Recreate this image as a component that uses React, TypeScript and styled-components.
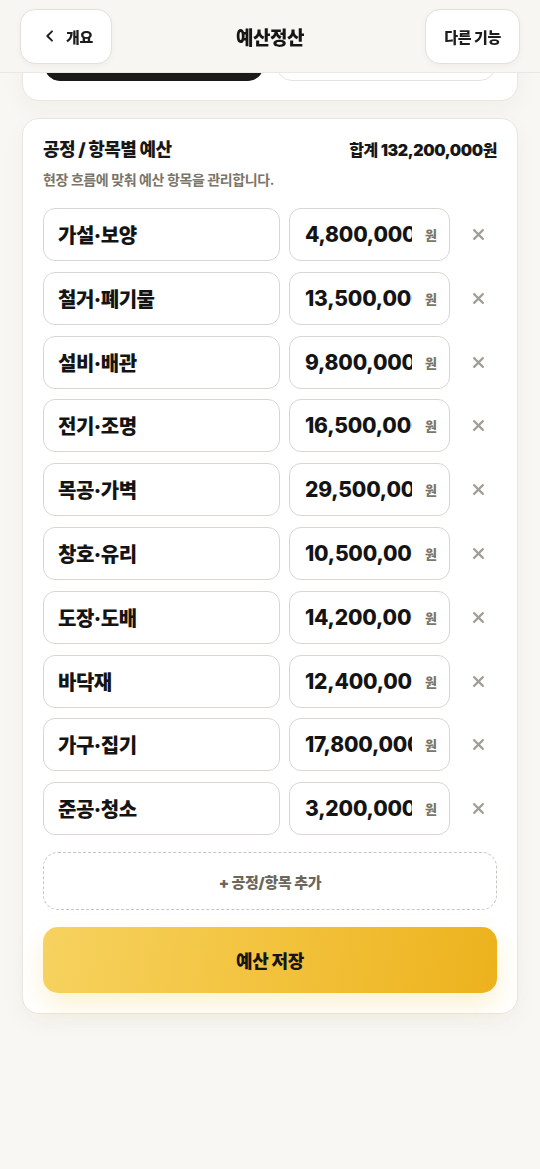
import React from "react";
import styled, { createGlobalStyle } from "styled-components";

const Global = createGlobalStyle`
  * { box-sizing: border-box; }
  html, body { margin: 0; padding: 0; background: #f8f7f3; }
  body {
    font-family: Inter, "Noto Sans CJK KR", "Noto Sans", sans-serif;
    color: #171717;
    -webkit-font-smoothing: antialiased;
  }
`;

const Header = styled.header`
  position: fixed;
  top: 0;
  left: 0;
  right: 0;
  height: 73px;
  z-index: 10;
  background: #f7f6f2;
  border-bottom: 1px solid #ebe8e2;
  display: grid;
  grid-template-columns: 1fr auto 1fr;
  align-items: center;
  padding: 0 20px;
`;

const HeadButton = styled.button<{ $align: "start" | "end" }>`
  justify-self: ${(p) => p.$align};
  height: 55px;
  padding-left: ${(p) => (p.$align === "start" ? "21px" : "18px")};
  padding-right: 18px;
  background: #fff;
  border: 1px solid #e3e0d9;
  border-radius: 15px;
  box-shadow: 0 2px 6px rgba(0, 0, 0, 0.04);
  display: flex;
  align-items: center;
  gap: 8px;
  font-family: inherit;
  font-size: 15px;
  font-weight: 900;
  color: #1d1d1d;
  letter-spacing: -0.3px;
`;

const Title = styled.h1`
  margin: 0;
  font-size: 19px;
  font-weight: 900;
  letter-spacing: -0.5px;
  color: #151515;
`;

const Main = styled.main`
  padding: 10px 22px 40px;
  display: flex;
  flex-direction: column;
  gap: 17px;
`;

const Card = styled.section`
  background: #fff;
  border: 1px solid #e9e6df;
  border-radius: 17px;
  box-shadow: 0 8px 24px rgba(60, 50, 20, 0.04);
`;

const TabCard = styled(Card)`
  padding: 20px 21px 19px;
  display: grid;
  grid-template-columns: 1fr 1fr;
  gap: 12px;
`;

const TabButton = styled.div<{ $active?: boolean }>`
  height: 50px;
  border-radius: 16px;
  background: ${(p) => (p.$active ? "#1a1a1a" : "#fff")};
  border: 1px solid ${(p) => (p.$active ? "#1a1a1a" : "#e6e3dc")};
`;

const BudgetCard = styled(Card)`
  padding: 18px 20px 20px;
`;

const CardHead = styled.div`
  display: flex;
  justify-content: space-between;
  align-items: baseline;
`;

const CardTitle = styled.h2`
  margin: 0;
  font-size: 18px;
  font-weight: 900;
  letter-spacing: -0.5px;
  line-height: 24px;
`;

const Total = styled.div`
  font-size: 16px;
  font-weight: 900;
  letter-spacing: -0.4px;
`;

const Sub = styled.p`
  margin: 9px 0 0;
  font-size: 14px;
  font-weight: 700;
  color: #7b7567;
  letter-spacing: -0.4px;
  line-height: 18px;
`;

const Rows = styled.div`
  margin-top: 19px;
  display: flex;
  flex-direction: column;
  gap: 10.8px;
`;

const Row = styled.div`
  display: grid;
  grid-template-columns: 1fr 161px 38px;
  column-gap: 9px;
  align-items: center;
`;

const Field = styled.div`
  height: 53px;
  border: 1px solid #d9d6d0;
  border-radius: 12px;
  background: #fff;
  display: flex;
  align-items: center;
  overflow: hidden;
`;

const NameInput = styled.input`
  border: none;
  outline: none;
  background: transparent;
  width: 100%;
  padding: 0 14px;
  font-family: inherit;
  font-size: 20px;
  font-weight: 900;
  color: #141414;
  letter-spacing: -0.5px;
`;

const AmountInput = styled(NameInput)`
  flex: 1;
  min-width: 0;
  padding: 0 0 0 15px;
  font-size: 21px;
  font-weight: 800;
  letter-spacing: -0.2px;
`;

const Unit = styled.span`
  flex: none;
  padding: 0 12px 0 13px;
  font-size: 13px;
  font-weight: 900;
  color: #7b7567;
`;

const RemoveBtn = styled.button`
  border: none;
  background: none;
  padding: 0;
  height: 38px;
  display: flex;
  align-items: center;
  justify-content: center;
  color: #a39e95;
`;

const AddButton = styled.button`
  margin-top: 17px;
  width: 100%;
  height: 58px;
  border: 1.5px dashed #c9c5bd;
  border-radius: 15px;
  background: #fff;
  font-family: inherit;
  font-size: 15px;
  font-weight: 900;
  color: #6c665b;
  letter-spacing: -0.3px;
`;

const SaveButton = styled.button`
  margin-top: 17px;
  width: 100%;
  height: 66px;
  border: none;
  border-radius: 15px;
  background: linear-gradient(100deg, #f6d25f 0%, #f2c13a 55%, #ecb21d 100%);
  box-shadow: 0 12px 26px rgba(240, 190, 50, 0.22);
  font-family: inherit;
  font-size: 18px;
  font-weight: 900;
  color: #161616;
  letter-spacing: -0.4px;
`;

const items: [string, string][] = [
  ["가설·보양", "4,800,000"],
  ["철거·폐기물", "13,500,000"],
  ["설비·배관", "9,800,000"],
  ["전기·조명", "16,500,000"],
  ["목공·가벽", "29,500,000"],
  ["창호·유리", "10,500,000"],
  ["도장·도배", "14,200,000"],
  ["바닥재", "12,400,000"],
  ["가구·집기", "17,800,000"],
  ["준공·청소", "3,200,000"],
];

const Chevron = () => (
  <svg width="16" height="16" viewBox="0 0 24 24" fill="none" stroke="#1d1d1d" strokeWidth="2.8" strokeLinecap="round" strokeLinejoin="round">
    <path d="M15 5l-7 7 7 7" />
  </svg>
);

const XIcon = () => (
  <svg width="15" height="15" viewBox="0 0 24 24" fill="none" stroke="currentColor" strokeWidth="3.4" strokeLinecap="round">
    <path d="M5 5l14 14M19 5L5 19" />
  </svg>
);

export default function App() {
  return (
    <>
      <Global />
      <Header>
        <HeadButton $align="start">
          <Chevron />
          개요
        </HeadButton>
        <Title>예산정산</Title>
        <HeadButton $align="end">다른 기능</HeadButton>
      </Header>
      <Main>
        <TabCard>
          <TabButton $active />
          <TabButton />
        </TabCard>
        <BudgetCard>
          <CardHead>
            <CardTitle>공정 / 항목별 예산</CardTitle>
            <Total>합계 132,200,000원</Total>
          </CardHead>
          <Sub>현장 흐름에 맞춰 예산 항목을 관리합니다.</Sub>
          <Rows>
            {items.map(([name, amount]) => (
              <Row key={name}>
                <Field>
                  <NameInput defaultValue={name} />
                </Field>
                <Field>
                  <AmountInput defaultValue={amount} inputMode="numeric" />
                  <Unit>원</Unit>
                </Field>
                <RemoveBtn aria-label="삭제">
                  <XIcon />
                </RemoveBtn>
              </Row>
            ))}
          </Rows>
          <AddButton>+ 공정/항목 추가</AddButton>
          <SaveButton>예산 저장</SaveButton>
        </BudgetCard>
      </Main>
    </>
  );
}
